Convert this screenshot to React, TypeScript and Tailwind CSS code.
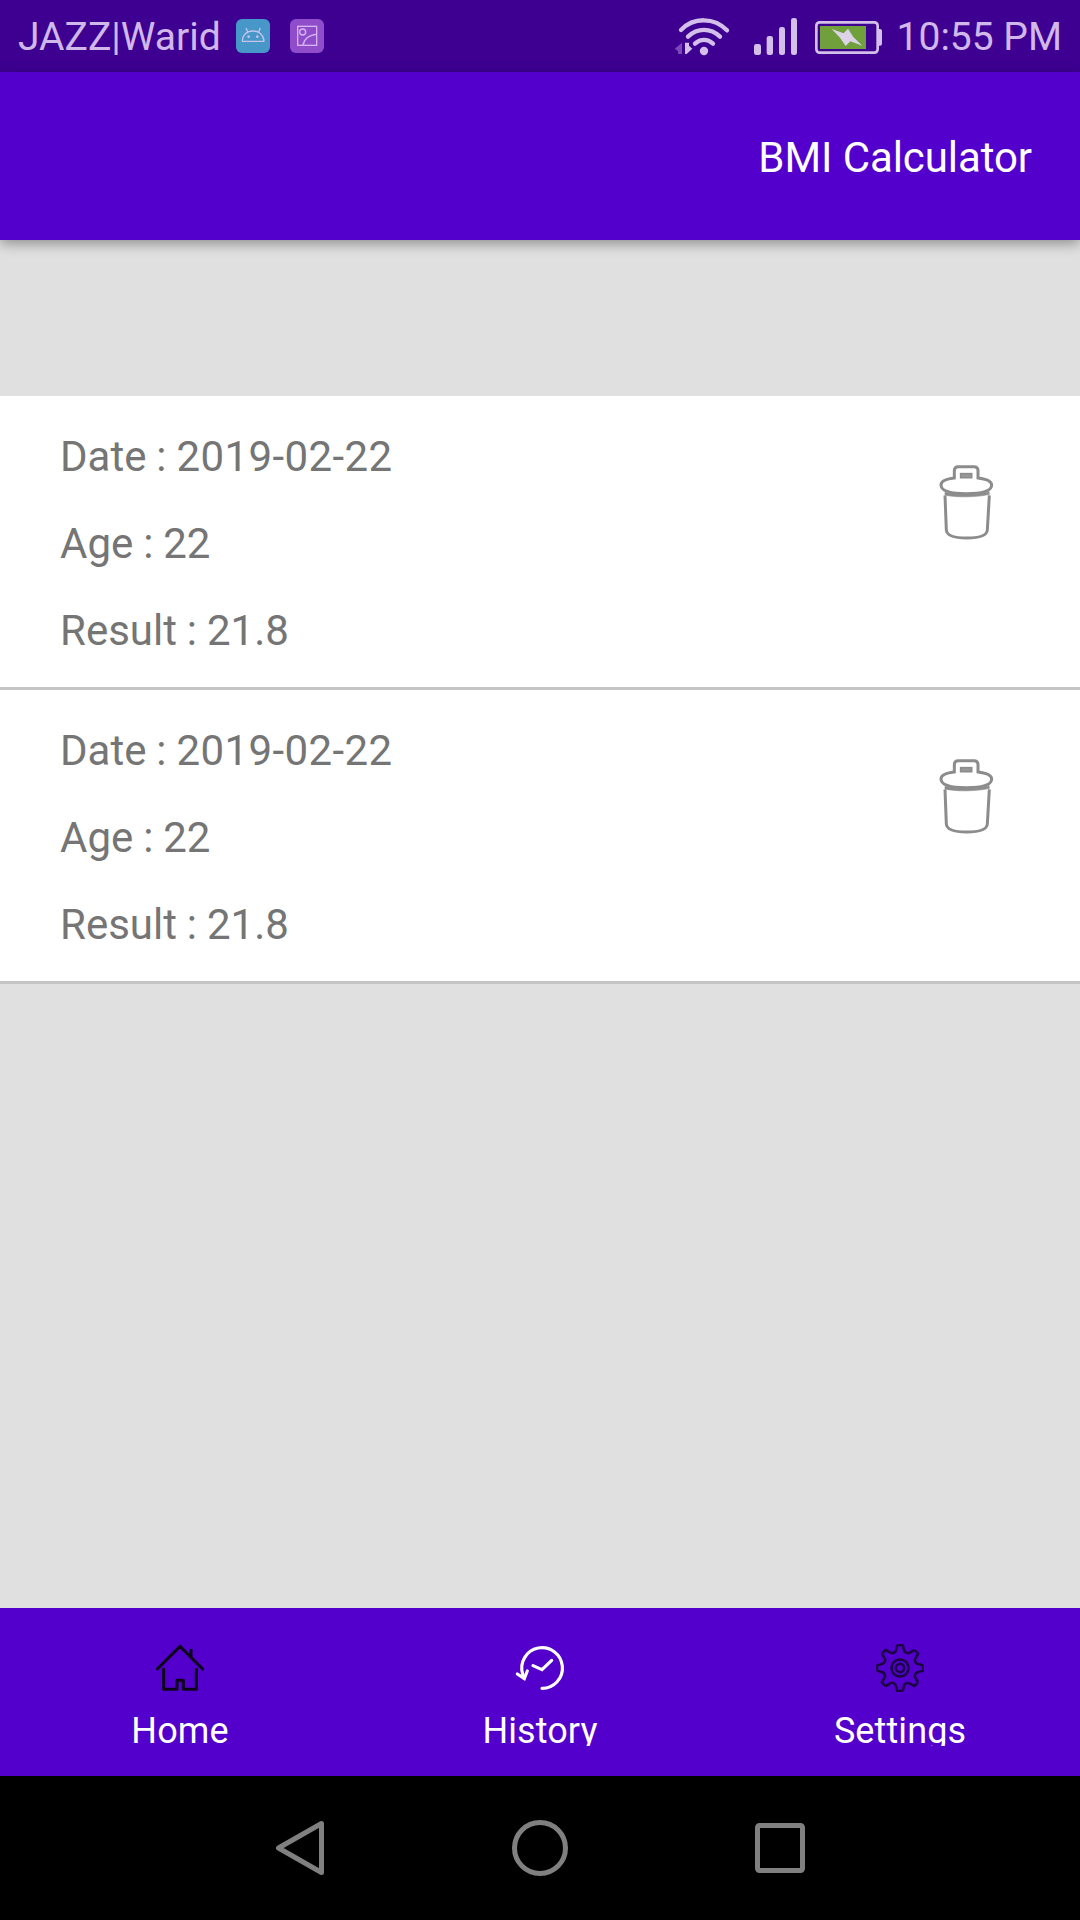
import type { ReactNode } from "react";

interface HistoryRecord {
  id: number;
  date: string;
  age: number;
  result: string;
}

interface TabProps {
  label: string;
  icon: ReactNode;
}

const records: HistoryRecord[] = [
  { id: 1, date: "2019-02-22", age: 22, result: "21.8" },
  { id: 2, date: "2019-02-22", age: 22, result: "21.8" },
];

const gearAngles = [0, 45, 90, 135, 180, 225, 270, 315];

function AndroidBadge() {
  return (
    <svg viewBox="708 57 102 102" className="w-[34px] h-[34px] ml-[15px]" fill="none" stroke="#c4c4ec" strokeWidth="4">
      <rect x="708" y="57" width="102" height="102" rx="18" fill="#4798c8" stroke="none" />
      <path d="M727 124H792C791 104 777 93 759 93S727 104 727 124Z" strokeLinejoin="round" />
      <path d="M743 95L738 84M776 95L781 84" />
      <circle cx="746" cy="110" r="4" fill="#c4c4ec" stroke="none" />
      <circle cx="772" cy="110" r="4" fill="#c4c4ec" stroke="none" />
    </svg>
  );
}

function PictureBadge() {
  return (
    <svg viewBox="870 57 102 102" className="w-[34px] h-[34px] ml-5" fill="none" stroke="#d6b4ee" strokeWidth="4">
      <rect x="870" y="57" width="102" height="102" rx="18" fill="#8f4dcb" stroke="none" />
      <rect x="893" y="79" width="57" height="57" />
      <circle cx="908" cy="96" r="9" />
      <path d="M909 136C912 117 928 104 950 103" />
    </svg>
  );
}

function WifiIcon() {
  return (
    <svg viewBox="36 48 180 126" className="w-[60px] h-[42px] mt-0.5" fill="none" stroke="#d3bfea" strokeWidth="13" strokeLinecap="round">
      <path d="M63 90C100 51 163 51 201 91" />
      <path d="M84 110C112 83 152 83 180 110" />
      <path d="M105 131C121 116 143 116 159 131" />
      <circle cx="132" cy="153" r="12.5" fill="#d3bfea" stroke="none" />
      <path d="M66 128V162H54V153L44 146Z" fill="#7c47b8" stroke="none" />
      <path d="M75 128H87V137L97 146L80 162H75Z" fill="#d3bfea" stroke="none" />
    </svg>
  );
}

function SignalIcon() {
  return (
    <svg viewBox="276 48 144 126" className="w-12 h-[42px] ml-5 mt-0.5" fill="#d3bfea">
      <rect x="282" y="132" width="21" height="33" rx="7" />
      <rect x="320" y="108" width="19" height="57" rx="7" />
      <rect x="357" y="81" width="18" height="84" rx="7" />
      <rect x="393" y="54" width="18" height="111" rx="7" />
    </svg>
  );
}

function BatteryIcon() {
  return (
    <svg viewBox="462 57 210 108" className="w-[70px] h-9 ml-3.5 mt-0.5">
      <rect x="469" y="67" width="184" height="91" rx="10" fill="none" stroke="#d3bfea" strokeWidth="8" />
      <path d="M656 87H660Q666 87 666 93V131Q666 137 660 137H656Z" fill="#d3bfea" />
      <rect x="480" y="78" width="138" height="69" fill="#6fa03c" />
      <path d="M515 87L551 100L564 86L580 111L607 137L571 124L557 138L540 113Z" fill="#dcd3e6" />
    </svg>
  );
}

function TrashIcon() {
  return (
    <svg viewBox="54 36 171 240" className="w-[57px] h-20" fill="none" stroke="#8c8c8c" strokeWidth="9">
      <path d="M75 136L79 240C80 256 98 264 140 264S201 256 202 240L208 136" />
      <path d="M103 84V62Q103 50 115 50H162Q174 50 174 62V84C200 87 215 94 215 105C215 121 193 131 139 131S63 121 63 105C63 94 77 87 103 84Z" fill="#fff" />
      <path d="M75 127C105 137 175 137 207 125L208 133C175 142 105 143 75 135Z" fill="#8c8c8c" strokeWidth="2" />
      <rect x="122" y="71" width="33" height="12" fill="#999" strokeWidth="5" />
    </svg>
  );
}

function HomeIcon() {
  return (
    <svg viewBox="168 132 144 144" className="w-12 h-12" fill="none" stroke="#0c001a" strokeWidth="9">
      <path d="M169 210L240 139L311 210" />
      <path d="M273 147V170" />
      <path d="M191 204V268H231V241H250V268H289V204" strokeLinejoin="round" />
    </svg>
  );
}

function HistoryIcon() {
  return (
    <svg viewBox="168 132 144 144" className="w-12 h-12 overflow-visible" fill="none" stroke="#fff" strokeWidth="9.5" strokeLinecap="round">
      <path d="M246 265A61 61 0 1 0 188 222L192 235" />
      <path d="M172 222L193 236L202 213" />
      <path d="M219 197L246 209L275 181" />
    </svg>
  );
}

function SettingsIcon() {
  return (
    <svg viewBox="198 132 144 144" className="w-12 h-12" fill="none" stroke="#1a0042" strokeWidth="7.5">
      <g transform="translate(270 204)">
        {gearAngles.map((angle) => (
          <path
            key={angle}
            d="M-8 -69H8L11 -58C13 -44 25 -41 33.2 -48.8L43.1 -54.4"
            transform={`rotate(${angle})`}
            strokeLinejoin="round"
          />
        ))}
        <circle r="25.5" />
        <circle r="12.5" />
      </g>
    </svg>
  );
}

function Tab({ label, icon }: TabProps) {
  return (
    <button className="flex-1 flex flex-col items-center pt-9">
      {icon}
      {/* Label box is shorter than the line, so descenders are cut */}
      <span className="block mt-[18px] h-9 overflow-hidden text-[36px] leading-[42px] tracking-[0.1px] text-white">
        {label}
      </span>
    </button>
  );
}

export default function App() {
  return (
    <div className="w-[1080px] h-[1920px] flex flex-col bg-[#e0e0e0] overflow-hidden font-['Roboto',sans-serif]">
      {/* Status bar */}
      <div className="h-[72px] shrink-0 flex items-center justify-between pl-[18px] pr-[18px] bg-[#3d0091] text-[39px] text-[#d0b8ea]">
        <div className="flex items-center">
          <span className="pt-[3px]">JAZZ|Warid</span>
          <AndroidBadge />
          <PictureBadge />
        </div>
        <div className="flex items-center">
          <WifiIcon />
          <SignalIcon />
          <BatteryIcon />
          <span className="ml-[13px] pt-[3px]">10:55 PM</span>
        </div>
      </div>

      {/* App bar */}
      <header className="h-[168px] shrink-0 flex justify-end pt-[61px] pr-12 bg-[#5300cc] shadow-[0_4px_12px_rgba(0,0,0,0.35)]">
        <h1 className="text-[42px] leading-[49px] tracking-[-0.08px] text-white">BMI Calculator</h1>
      </header>

      {/* History list */}
      <main className="flex-1 pt-[156px]">
        {records.map((record) => (
          <div
            key={record.id}
            className="h-[294px] flex justify-between pl-[60px] pr-[85px] bg-white border-b-3 border-[#c4c4c4]"
          >
            <div className="flex flex-col gap-[38px] pt-9 text-[42px] leading-[49px] [word-spacing:-0.5px] text-[#757575]">
              <p>
                Date : <span className="tracking-[0.4px]">{record.date}</span>
              </p>
              <p>Age : {record.age}</p>
              <p>Result : {record.result}</p>
            </div>
            <button className="self-start mt-[66px]">
              <TrashIcon />
            </button>
          </div>
        ))}
      </main>

      {/* Bottom tabs */}
      <nav className="h-[168px] shrink-0 flex bg-[#5300cc]">
        <Tab label="Home" icon={<HomeIcon />} />
        <Tab label="History" icon={<HistoryIcon />} />
        <Tab label="Settings" icon={<SettingsIcon />} />
      </nav>

      {/* System navigation */}
      <div className="h-36 shrink-0 flex items-center justify-center gap-[180px] bg-black">
        <svg viewBox="0 0 60 60" className="w-[60px] h-[60px]" fill="none" stroke="#808080" strokeWidth="5" strokeLinejoin="round">
          <path d="M51.5 5.5V54.5L8.5 30Z" />
        </svg>
        <svg viewBox="0 0 60 60" className="w-[60px] h-[60px]" fill="none" stroke="#808080" strokeWidth="5">
          <circle cx="30" cy="30" r="25.5" />
        </svg>
        <svg viewBox="0 0 60 60" className="w-[60px] h-[60px]" fill="none" stroke="#808080" strokeWidth="5">
          <rect x="7.5" y="7.5" width="45" height="45" rx="2" />
        </svg>
      </div>
    </div>
  );
}
